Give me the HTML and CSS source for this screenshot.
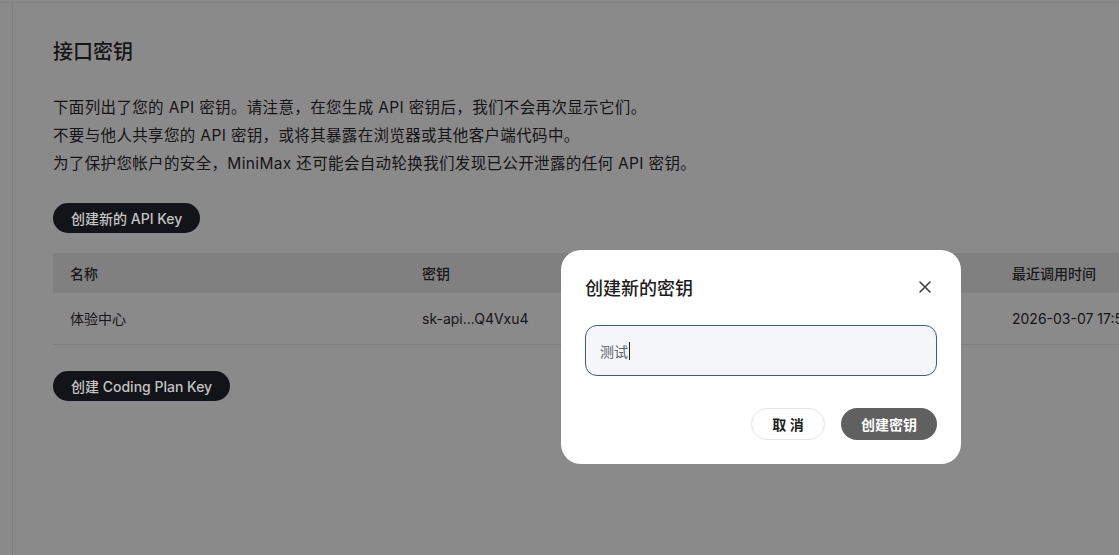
FILE: index.html
```html
<!DOCTYPE html>
<html lang="zh-CN">
<head>
  <meta charset="UTF-8">
  <meta name="viewport" content="width=device-width, initial-scale=1.0">
  <title>接口密钥</title>
  <link rel="stylesheet" href="styles.css">
</head>
<body>

<div class="topbar"></div>

<div class="layout">
  <aside class="sidebar"></aside>

  <main class="main">
    <h1>接口密钥</h1>

    <div class="intro">
      <p>下面列出了您的 API 密钥。请注意，在您生成 API 密钥后，我们不会再次显示它们。</p>
      <p>不要与他人共享您的 API 密钥，或将其暴露在浏览器或其他客户端代码中。</p>
      <p>为了保护您帐户的安全，MiniMax 还可能会自动轮换我们发现已公开泄露的任何 API 密钥。</p>
    </div>

    <button class="pill-btn">创建新的 API Key</button>

    <table class="key-table">
      <thead>
        <tr>
          <th class="col-name">名称</th>
          <th class="col-key">密钥</th>
          <th class="col-created">创建时间</th>
          <th class="col-used">最近调用时间</th>
        </tr>
      </thead>
      <tbody>
        <tr>
          <td>体验中心</td>
          <td>sk-api...Q4Vxu4</td>
          <td>2026-03-07 17:52:10</td>
          <td>2026-03-07 17:52:41</td>
        </tr>
      </tbody>
    </table>

    <button class="pill-btn">创建 Coding Plan Key</button>
  </main>
</div>

<div class="modal">
  <div class="modal-head">
    <h2>创建新的密钥</h2>
    <button class="modal-close" aria-label="关闭">
      <svg width="12" height="12" viewBox="0 0 12 12"><path d="M1 1L11 11M11 1L1 11" stroke="#3a3a3a" stroke-width="1.5" stroke-linecap="round"/></svg>
    </button>
  </div>
  <div class="modal-input"><span>测试</span><i class="caret"></i></div>
  <div class="modal-actions">
    <button class="btn-cancel">取 消</button>
    <button class="btn-create">创建密钥</button>
  </div>
</div>

</body>
</html>
```

FILE: styles.css
```css
* {
  box-sizing: border-box;
}
html, body {
  height: 100%;
}
body {
  margin: 0;
  font-family: 'Inter', 'Noto Sans CJK SC', sans-serif;
  background-color: #8a8a8a;
  color: #141414;
  overflow: hidden;
}
.topbar {
  height: 3px;
  border-bottom: 1px solid #828282;
}
.layout {
  display: flex;
  height: calc(100% - 3px);
}
.sidebar {
  width: 13px;
  flex: none;
  border-right: 1px solid #7e7e7e;
}
.main {
  flex: 1;
  min-width: 0;
  padding: 35px 0 0 40px;
  overflow: hidden;
}
h1 {
  margin: 0;
  font-size: 20px;
  font-weight: 500;
  line-height: 28px;
  color: #151515;
}
.intro {
  margin-top: 28px;
  font-size: 15.5px;
  line-height: 28px;
  letter-spacing: 0.35px;
}
.intro p {
  margin: 0;
}
.pill-btn {
  display: block;
  height: 30px;
  padding: 0 18px;
  margin-top: 25px;
  border: none;
  border-radius: 15px;
  background-color: #121419;
  color: #c4c4c4;
  font-family: inherit;
  font-size: 14px;
  font-weight: 500;
}
.key-table {
  margin-top: 20px;
  margin-bottom: 26px;
  border-collapse: collapse;
  table-layout: fixed;
  width: 1200px;
}
.key-table .col-name { width: 352px; }
.key-table .col-key { width: 295px; }
.key-table .col-created { width: 295px; }
.key-table .col-used { width: 258px; }
.key-table th,
.key-table td {
  text-align: left;
  padding: 0 17px;
  font-size: 14px;
  white-space: nowrap;
  overflow: hidden;
}
.key-table th {
  height: 40px;
  background-color: #808080;
  font-weight: 500;
  color: #181818;
}
.key-table td {
  height: 51px;
  border-bottom: 1px solid #7f7f7f;
  color: #161616;
}

/* modal */
.modal {
  position: fixed;
  left: 561px;
  top: 250px;
  width: 400px;
  height: 214px;
  padding: 22px 24px 24px;
  background: #fff;
  border-radius: 20px;
}
.modal-head {
  display: flex;
  align-items: center;
  justify-content: space-between;
  height: 30px;
}
.modal-head h2 {
  margin: 0;
  font-size: 18px;
  font-weight: 500;
  color: #1c1c1c;
}
.modal-close {
  border: none;
  background: none;
  padding: 0;
  margin-right: 6px;
  display: flex;
}
.modal-input {
  display: flex;
  align-items: center;
  height: 51px;
  margin-top: 23px;
  padding: 0 14px;
  background: #f5f6f8;
  border: 1px solid #2d5ea6;
  border-radius: 12px;
  font-size: 14px;
  color: #5c6068;
}
.caret {
  display: inline-block;
  width: 1px;
  height: 18px;
  background: #222;
  margin-left: 1px;
}
.modal-actions {
  display: flex;
  justify-content: flex-end;
  gap: 16px;
  margin-top: 32px;
}
.modal-actions button {
  height: 32px;
  border-radius: 16px;
  font-family: inherit;
  font-size: 14px;
  font-weight: 700;
}
.btn-cancel {
  width: 74px;
  background: #fff;
  border: 1px solid #e3e4e8;
  color: #1e1e1e;
}
.btn-create {
  width: 96px;
  background: #606060;
  border: none;
  color: #fff;
}
```
